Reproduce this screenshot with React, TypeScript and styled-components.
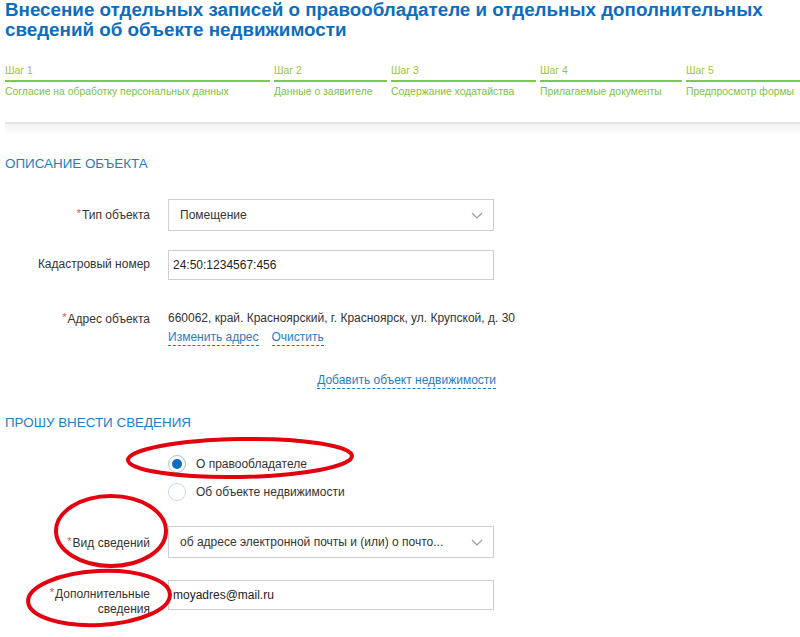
import React from 'react';
import styled, { createGlobalStyle } from 'styled-components';

const GlobalStyle = createGlobalStyle`
  html, body {
    margin: 0;
    padding: 0;
    background: #fff;
    font-family: "Liberation Sans", Arial, sans-serif;
    color: #333;
  }
`;

const Page = styled.div`
  position: relative;
  width: 800px;
  height: 637px;
  overflow: hidden;
  padding-left: 5px;
  box-sizing: border-box;
`;

const Title = styled.h1`
  margin: 0;
  width: 795px;
  font-size: 18.8px;
  line-height: 20px;
  font-weight: bold;
  color: #0b6dbf;
`;

const Steps = styled.div`
  display: flex;
  gap: 4px;
  margin-top: 25px;
  width: 830px;
`;

const Step = styled.div<{ $width?: number }>`
  flex: ${p => (p.$width ? `0 0 ${p.$width}px` : '1')};
  font-size: 10.4px;
  line-height: 12px;
  color: #7dbf48;
  white-space: nowrap;
`;

const StepNumber = styled.div`
  color: #9cc43a;
  padding-bottom: 3px;
  border-bottom: 2px solid #7ec84c;
`;

const StepName = styled.div`
  padding-top: 4px;
`;

const Band = styled.div`
  margin-top: 24px;
  height: 12px;
  border-top: 2px solid #e4e4e4;
  background: linear-gradient(#f3f3f3, #fff);
`;

const SectionTitle = styled.h2<{ $top: number }>`
  margin: ${p => p.$top}px 0 0;
  font-size: 13.4px;
  line-height: 16px;
  font-weight: normal;
  color: #1f7dc6;
`;

const Row = styled.div<{ $top: number }>`
  display: flex;
  align-items: flex-start;
  gap: 18px;
  margin-top: ${p => p.$top}px;
  width: 489px;
`;

const Label = styled.label<{ $pad?: number }>`
  flex: 0 0 145px;
  text-align: right;
  font-size: 12px;
  line-height: 15px;
  color: #333;
  padding-top: ${p => p.$pad ?? 0}px;
`;

const Star = styled.span`
  color: #d9534f;
  font-size: 11px;
  vertical-align: 2px;
  margin-right: 1px;
`;

const Field = styled.div`
  flex: 1;
  min-width: 0;
`;

const Select = styled.div`
  height: 32px;
  border: 1px solid #cfcfcf;
  box-sizing: border-box;
  display: flex;
  align-items: center;
  justify-content: space-between;
  padding: 0 10px 0 11px;
  font-size: 12px;
  color: #333;
  white-space: nowrap;
`;

const Input = styled.div`
  height: 30px;
  border: 1px solid #cfcfcf;
  box-sizing: border-box;
  display: flex;
  align-items: center;
  padding: 0 4px;
  font-size: 12px;
  color: #222;
`;

const Plain = styled.div`
  font-size: 12px;
  line-height: 16px;
  color: #333;
  white-space: nowrap;
`;

const Links = styled.div`
  display: flex;
  gap: 13px;
  margin-top: 4px;
`;

const DashLink = styled.a`
  font-size: 12px;
  line-height: 15px;
  color: #1f7dc6;
  text-decoration: none;
  border-bottom: 1px dashed #1f7dc6;
  cursor: pointer;
`;

const AddRow = styled.div`
  width: 491px;
  margin-top: 27px;
  display: flex;
  justify-content: flex-end;
`;

const Radios = styled.div`
  display: flex;
  flex-direction: column;
  gap: 10px;
  margin: 24px 0 0 163px;
`;

const RadioItem = styled.label`
  display: flex;
  align-items: center;
  gap: 10px;
  font-size: 12px;
  color: #333;
`;

const RadioCircle = styled.span<{ $on?: boolean }>`
  width: 18px;
  height: 18px;
  border-radius: 50%;
  border: 1px solid ${p => (p.$on ? '#9fc3e4' : '#c3daee')};
  box-sizing: border-box;
  display: flex;
  align-items: center;
  justify-content: center;
  &::after {
    content: '';
    width: 10px;
    height: 10px;
    border-radius: 50%;
    background: ${p => (p.$on ? '#0b6dbf' : 'transparent')};
  }
`;

const Marks = styled.svg`
  position: absolute;
  left: 0;
  top: 0;
  pointer-events: none;
`;

function Chevron() {
  return (
    <svg width="12" height="7" viewBox="0 0 12 7">
      <polyline points="1,1 6,6 11,1" fill="none" stroke="#9a9a9a" strokeWidth="1.2" />
    </svg>
  );
}

const steps = [
  { n: 'Шаг 1', name: 'Согласие на обработку персональных данных', w: 265 },
  { n: 'Шаг 2', name: 'Данные о заявителе', w: 113 },
  { n: 'Шаг 3', name: 'Содержание ходатайства', w: 145 },
  { n: 'Шаг 4', name: 'Прилагаемые документы', w: 142 },
  { n: 'Шаг 5', name: 'Предпросмотр формы' },
];

export default function App() {
  return (
    <>
      <GlobalStyle />
      <Page>
        <Title>
          Внесение отдельных записей о правообладателе и отдельных дополнительных сведений об объекте недвижимости
        </Title>

        <Steps>
          {steps.map(s => (
            <Step key={s.n} $width={s.w}>
              <StepNumber>{s.n}</StepNumber>
              <StepName>{s.name}</StepName>
            </Step>
          ))}
        </Steps>

        <Band />

        <SectionTitle $top={20}>ОПИСАНИЕ ОБЪЕКТА</SectionTitle>

        <Row $top={27}>
          <Label $pad={7}>
            <Star>*</Star>Тип объекта
          </Label>
          <Field>
            <Select>
              Помещение
              <Chevron />
            </Select>
          </Field>
        </Row>

        <Row $top={19}>
          <Label $pad={7}>Кадастровый номер</Label>
          <Field>
            <Input>24:50:1234567:456</Input>
          </Field>
        </Row>

        <Row $top={30}>
          <Label>
            <Star>*</Star>Адрес объекта
          </Label>
          <Field>
            <Plain>660062, край. Красноярский, г. Красноярск, ул. Крупской, д. 30</Plain>
            <Links>
              <DashLink>Изменить адрес</DashLink>
              <DashLink>Очистить</DashLink>
            </Links>
          </Field>
        </Row>

        <AddRow>
          <DashLink>Добавить объект недвижимости</DashLink>
        </AddRow>

        <SectionTitle $top={26}>ПРОШУ ВНЕСТИ СВЕДЕНИЯ</SectionTitle>

        <Radios>
          <RadioItem>
            <RadioCircle $on />
            О правообладателе
          </RadioItem>
          <RadioItem>
            <RadioCircle />
            Об объекте недвижимости
          </RadioItem>
        </Radios>

        <Row $top={25}>
          <Label $pad={8}>
            <Star>*</Star>Вид сведений
          </Label>
          <Field>
            <Select>
              об адресе электронной почты и (или) о почто...
              <Chevron />
            </Select>
          </Field>
        </Row>

        <Row $top={22}>
          <Label $pad={5}>
            <Star>*</Star>Дополнительные
            <br />
            сведения
          </Label>
          <Field>
            <Input>moyadres@mail.ru</Input>
          </Field>
        </Row>

        <Marks width="800" height="637" viewBox="0 0 800 637">
          <g fill="none" stroke="#e3000f" strokeWidth="4">
            <ellipse cx="240" cy="458" rx="112" ry="19" transform="rotate(-1 240 458)" />
            <ellipse cx="111" cy="531" rx="55" ry="35" />
            <ellipse cx="99" cy="598" rx="71" ry="27" transform="rotate(-3 99 598)" />
          </g>
        </Marks>
      </Page>
    </>
  );
}
